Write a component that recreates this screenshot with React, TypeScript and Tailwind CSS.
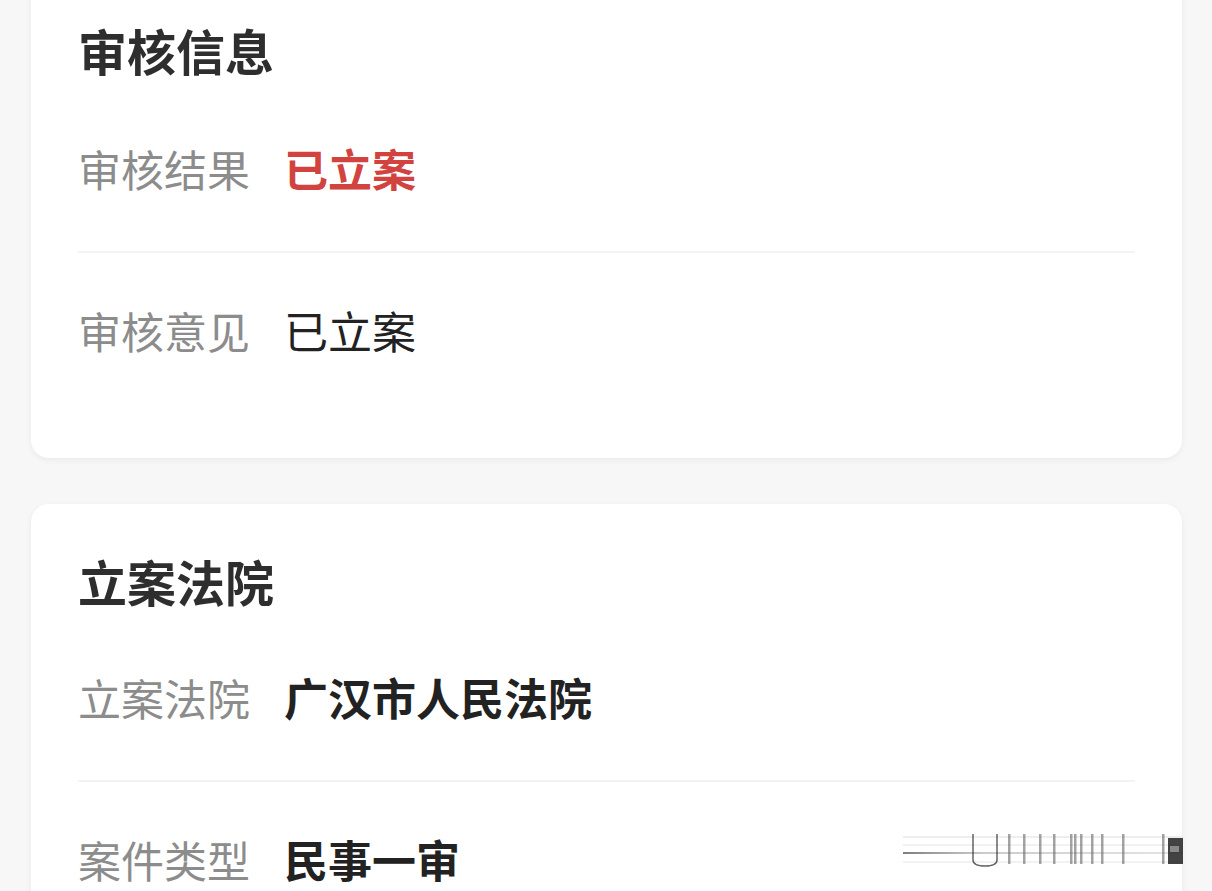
import React from 'react'

const FONT = { fontFamily: '"Noto Sans CJK SC", "Noto Sans", sans-serif' }

interface Row {
  label: string
  value: string
  tone?: 'red' | 'bold' | 'plain'
}

const Field: React.FC<{ row: Row }> = ({ row }) => {
  const valueClass =
    row.tone === 'red'
      ? 'text-[#d2433f] font-bold'
      : row.tone === 'bold'
        ? 'text-[#222222] font-bold'
        : 'text-[#222222]'
  return (
    <div className="flex items-center h-[160px] pb-[6px] leading-[56px]">
      <span className="w-[206px] shrink-0 text-[43px] text-[#8c8c8c]">{row.label}</span>
      <span className={`text-[44px] ${valueClass}`}>{row.value}</span>
    </div>
  )
}

const Card: React.FC<{ title: string; rows: Row[]; wide?: boolean }> = ({ title, rows, wide }) => (
  <div
    className={`bg-white rounded-[18px] shadow-[0_2px_6px_rgba(0,0,0,0.06)] px-[47px] pt-[45px] ${wide ? 'pb-[45px]' : 'pb-[47px]'}`}
  >
    <h2 className={`text-[49px] leading-[64px] font-bold text-[#2e2e2e] ${wide ? 'mb-[9px]' : 'mb-[7px]'}`}>{title}</h2>
    {rows.map((r, i) => (
      <React.Fragment key={r.label}>
        {i > 0 && <div className="h-[2px] bg-[#f3f3f3]" />}
        <Field row={r} />
      </React.Fragment>
    ))}
  </div>
)

// smeared watermark in the bottom-right corner
const Smear = () => {
  const bars = [1008, 1023, 1039, 1053, 1070, 1074, 1080, 1091, 1101, 1122, 1162]
  return (
    <svg className="absolute left-[880px] top-[826px]" width="310" height="45" viewBox="880 826 310 45">
      <defs>
        <linearGradient id="fade" x1="0" x2="1">
          <stop offset="0" stopColor="#444" stopOpacity="0.7" />
          <stop offset="0.3" stopColor="#999" stopOpacity="0.5" />
          <stop offset="1" stopColor="#bbb" stopOpacity="0.4" />
        </linearGradient>
      </defs>
      <rect x="903" y="836" width="280" height="2" fill="#e2e2e2" opacity="0.6" />
      <rect x="903" y="844" width="280" height="2" fill="#e8e8e8" opacity="0.6" />
      <rect x="903" y="852" width="280" height="2" fill="url(#fade)" />
      <rect x="903" y="861" width="280" height="2" fill="#eaeaea" opacity="0.6" />
      <path d="M973 834 V860 Q973 866 985 866 Q997 866 997 860 V834" fill="none" stroke="#222" strokeWidth="1.5" opacity="0.7" />
      {bars.map((x) => (
        <rect key={x} x={x} y="834" width="2.5" height="30" fill="#666" opacity="0.6" />
      ))}
      <rect x="1168" y="838" width="15" height="26" fill="#222" opacity="0.85" />
      <rect x="1170" y="846" width="9" height="6" fill="#888" />
    </svg>
  )
}

export default function App() {
  return (
    <div className="relative w-[1212px] h-[891px] overflow-hidden bg-[#f7f7f7]" style={FONT}>
      <div className="pl-[31px] pr-[30px] -mt-[27px] flex flex-col gap-[46px]">
        <Card
          wide
          title="审核信息"
          rows={[
            { label: '审核结果', value: '已立案', tone: 'red' },
            { label: '审核意见', value: '已立案', tone: 'plain' },
          ]}
        />
        <Card
          title="立案法院"
          rows={[
            { label: '立案法院', value: '广汉市人民法院', tone: 'bold' },
            { label: '案件类型', value: '民事一审', tone: 'bold' },
          ]}
        />
      </div>
      <Smear />
    </div>
  )
}
